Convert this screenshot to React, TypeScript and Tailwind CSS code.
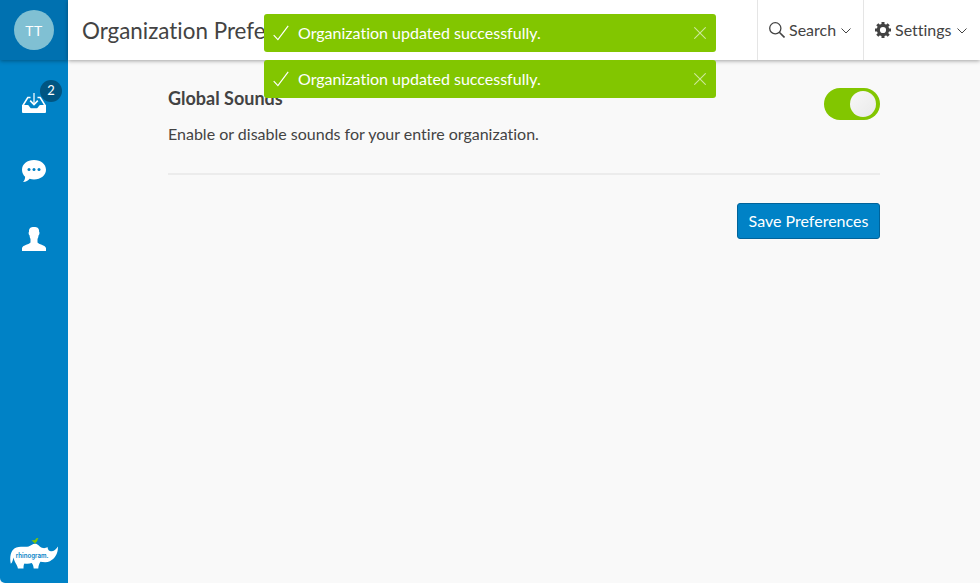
import React from "react";

function Toast() {
  return (
    <div className="flex h-[38px] w-[452px] items-center rounded-[3px] bg-[#82c600] text-white">
      <svg className="ml-[9px] h-4 w-4 shrink-0" viewBox="0 0 16 16" fill="none" stroke="currentColor" strokeWidth="1.2">
        <path d="M.7 10.2 4.9 14.6 15.2.8" />
      </svg>
      <span className="ml-[9px] flex-1 text-[16px] leading-6">Organization updated successfully.</span>
      <svg className="mr-[10px] h-3 w-3 opacity-60" viewBox="0 0 12 12" stroke="currentColor" strokeWidth="1.1">
        <path d="M.3.3 11.7 11.7M11.7.3.3 11.7" />
      </svg>
    </div>
  );
}

function Chevron() {
  return (
    <svg className="mt-[2px] ml-[5px] h-[6px] w-[10px]" viewBox="0 0 10 6" fill="none" stroke="currentColor" strokeWidth="1">
      <path d="M.5.5 5 5 9.5.5" />
    </svg>
  );
}

function Gear() {
  return (
    <svg className="mr-1 h-4 w-4" viewBox="0 0 16 16" fill="none" stroke="currentColor">
      <circle cx="8" cy="8" r="4.65" strokeWidth="3.1" />
      <path d="M8 0v3M8 13v3M0 8h3M13 8h3M2.3 2.3l2.1 2.1M11.6 11.6l2.1 2.1M13.7 2.3l-2.1 2.1M4.4 11.6l-2.1 2.1" strokeWidth="3" />
    </svg>
  );
}

function RhinoLogo() {
  return (
    <svg className="h-8 w-12" viewBox="0 0 48 32">
      <path
        fill="#fff"
        d="M.8 25.800C-.4 20.500.3 15.500 2.600 12.200 5.500 8.200 10 8.600 14 8.800c3.500.2 5.300-.4 7.500-1.800C23.500 5.700 25.400 5.300 27 6.200c2.300 1.300 3.200 3.200 6 3.900 1.700.4 3.300-.4 4.500-1 .2 1.800.8 3.400 2.500 4 3.100 1 5.600-1.300 7.900-4.600.4 6.800-2.900 12.300-8 14.700-3.200 1.500-6.800.8-9.500.5-1.200 2.100-2.100 4.100-2.100 6.800h-4.600c-.2-2-.6-4-2-5.400-2 .9-5 .9-7.200.5-1 1.100-.9 3.200-1 4.900H7.900C7.600 27 4.200 24.300 3.600 19.500c-.9 2.100-.7 4.700-2.800 6.300Z"
      />
      <path fill="#82c600" d="M21.500 2.300c1.500-.1 2.700.2 3.700-.3C25.500.9 26.500.1 27.600 0l.9.6-.8.5c0 2-1.100 3.300-2.300 3.700V6h-.7V4.900c-1.200-.3-2-1.500-3.200-2.600Z" />
      <text x="5.800" y="19.600" fill="#0082c6" fontFamily="Inter, sans-serif" fontSize="7.200" fontWeight="600" textLength="32.600" lengthAdjust="spacingAndGlyphs">
        rhinogram.
      </text>
    </svg>
  );
}

function Sidebar() {
  return (
    <aside className="flex w-[68px] shrink-0 flex-col items-center overflow-hidden rounded-bl-[5px] bg-[#0082c6]">
      <div className="flex h-[60px] w-full shrink-0 items-center justify-center bg-[#0071b0] shadow-[0_1px_4px_rgba(0,0,0,0.35)]">
        <div className="flex h-10 w-10 items-center justify-center rounded-full bg-[#80c0d3] text-[14px] tracking-[0.5px] text-white">TT</div>
      </div>
      <div className="relative mt-[33px] h-5 w-6">
        <svg className="h-5 w-6" viewBox="0 0 24 20">
          <path fill="none" stroke="#fff" strokeWidth="1.500" d="M8.500 4.500H5.800L.9 12.500M15.500 4.500h2.700l4.900 8" />
          <path fill="#fff" d="M0 12h5.600c1.800 0 2 3.300 4 3.300h4.800c2 0 2.200-3.300 4-3.300H24v7a1 1 0 0 1-1 1H1a1 1 0 0 1-1-1Z" />
          <path fill="none" stroke="#b9dff1" strokeWidth="1.700" d="M12 0v11" />
          <path fill="none" stroke="#fff" strokeWidth="1.600" d="m8.200 7.600 3.800 3.900 3.800-3.900" />
        </svg>
        <span className="absolute top-[-13px] left-[18px] flex h-[22px] w-[22px] items-center justify-center rounded-full bg-[#005582] text-[13px] text-white">2</span>
      </div>
      <svg className="mt-[46px] h-6 w-6" viewBox="0 0 24 24">
        <path fill="#fff" d="M12 1C5.200 1 0 5.200 0 10.700c0 3.200 1.400 5.400 3.100 7 .1 2.200-.8 3.900-2.100 5.300 3-.1 5.300-1.500 6.600-3.200 1.400.4 2.800.6 4.400.6 6.800 0 12-4.200 12-9.700S18.800 1 12 1Z" />
        <g fill="#0082c6">
          <circle cx="7" cy="10.500" r="1.500" />
          <circle cx="12" cy="10.500" r="1.500" />
          <circle cx="17" cy="10.500" r="1.500" />
        </g>
      </svg>
      <svg className="mt-[44px] h-6 w-6" viewBox="0 0 24 24">
        <path fill="#fff" d="M12 0C8.600 0 6.800 1.200 7 4.700c-.8.600-.3 3.100.5 3.600.2 1.600.5 2.900 1 3.800v3.400C7.600 17.200.8 18 0 21v3h24v-3c-.8-3-7.600-3.800-8.500-5.500v-3.400c.5-.9.900-2.200 1.100-3.800.8-.5 1.300-3 .5-3.600C17.300 1.200 15.400 0 12 0Z" />
      </svg>
      <div className="mt-auto mb-[13px]">
        <RhinoLogo />
      </div>
    </aside>
  );
}

export default function App() {
  return (
    <div className="relative flex h-[583px] w-[980px] overflow-hidden bg-[#f9f9f9] font-['Lato',sans-serif] text-[#434343] antialiased [font-variant-ligatures:none]">
      <Sidebar />
      <div className="flex flex-1 flex-col">
        <header className="flex h-[60px] shrink-0 items-center bg-white pl-[14px] shadow-[0_1px_4px_rgba(0,0,0,0.35)]">
          <h1 className="flex-1 pt-px text-[22.4px] leading-8">Organization Preferences</h1>
          <button className="flex h-full w-[106px] items-center border-l border-[#e5e5e5] pl-[11px] text-[16px]">
            <svg className="mr-1 h-4 w-4" viewBox="0 0 16 16" fill="none" stroke="currentColor" strokeWidth="1.300">
              <circle cx="6.300" cy="6.300" r="5.600" />
              <path d="m10.300 10.300 5.200 5.200" strokeWidth="1.600" />
            </svg>
            Search
            <Chevron />
          </button>
          <button className="flex h-full w-[117px] items-center border-l border-[#e5e5e5] pl-[11px] text-[16px]">
            <Gear />
            Settings
            <Chevron />
          </button>
        </header>
        <main className="ml-[100px] w-[712px]">
          <section className="flex h-[115px] justify-between border-b-2 border-[#ececec] pt-[28px]">
            <div>
              <h2 className="text-[18px] leading-5 font-bold">Global Sounds</h2>
              <p className="mt-[14px] text-[16px] leading-6">Enable or disable sounds for your entire organization.</p>
            </div>
            <button role="switch" aria-checked="true" aria-label="Global Sounds" className="flex h-8 w-14 items-center justify-end rounded-full bg-[#82c600] pr-1">
              <span className="h-[26px] w-[26px] rounded-full bg-linear-to-br from-[#f8f8f8] to-[#e9e9e9]" />
            </button>
          </section>
          <div className="flex justify-end pt-7">
            <button className="h-9 w-[143px] rounded-[3px] border border-[#00639a] bg-[#0082c6] text-[16px] text-white">Save Preferences</button>
          </div>
        </main>
      </div>
      <div className="absolute top-[14px] left-[264px] flex flex-col gap-2">
        <Toast />
        <Toast />
      </div>
    </div>
  );
}
